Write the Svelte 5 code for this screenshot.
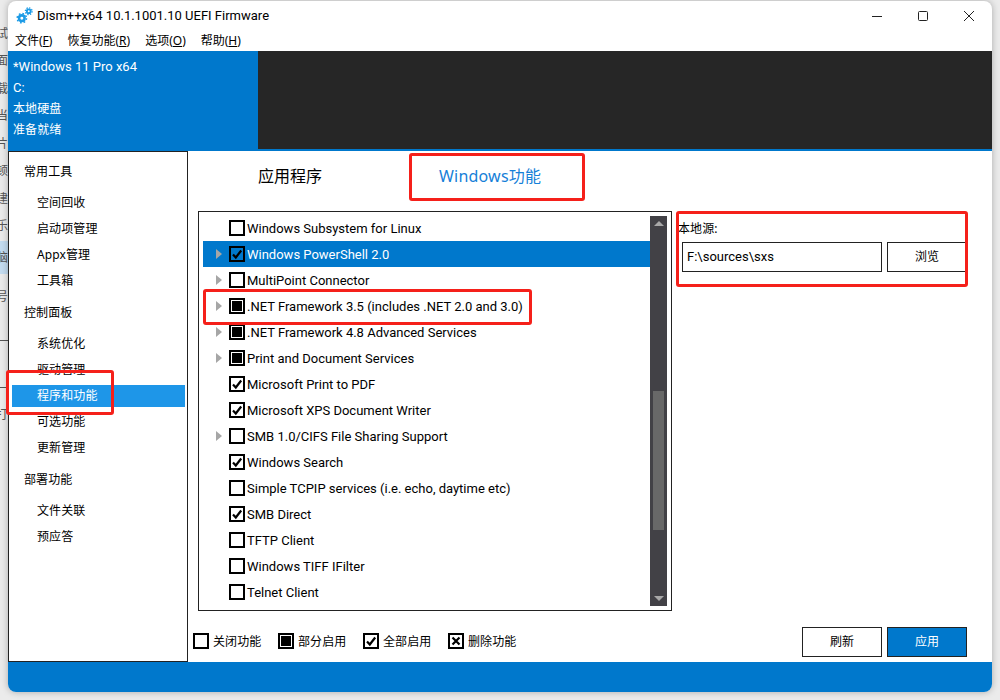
<script>
    const strip = [
        { t: "试" }, { t: "面" }, { t: "载" }, { t: "当" }, { t: "片" }, { t: "顿" }, { t: "建" }, { t: "乐" },
        { t: "脑", active: true }, { t: "号" }, { t: "" }
    ];

    const menus = [
        { label: "文件", key: "F" },
        { label: "恢复功能", key: "R" },
        { label: "选项", key: "O" },
        { label: "帮助", key: "H" }
    ];

    const info = [
        { text: "*Windows 11 Pro x64", latin: true },
        { text: "C:", latin: true },
        { text: "本地硬盘" },
        { text: "准备就绪" }
    ];

    const groups = [
        { title: "常用工具", items: ["空间回收", "启动项管理", "Appx管理", "工具箱"] },
        { title: "控制面板", items: ["系统优化", "驱动管理", "程序和功能", "可选功能", "更新管理"] },
        { title: "部署功能", items: ["文件关联", "预应答"] }
    ];

    const features = [
        { name: "Windows Subsystem for Linux", state: "off", arrow: false },
        { name: "Windows PowerShell 2.0", state: "on", arrow: true, selected: true },
        { name: "MultiPoint Connector", state: "off", arrow: true },
        { name: ".NET Framework 3.5 (includes .NET 2.0 and 3.0)", state: "part", arrow: true },
        { name: ".NET Framework 4.8 Advanced Services", state: "part", arrow: true },
        { name: "Print and Document Services", state: "part", arrow: true },
        { name: "Microsoft Print to PDF", state: "on", arrow: false },
        { name: "Microsoft XPS Document Writer", state: "on", arrow: false },
        { name: "SMB 1.0/CIFS File Sharing Support", state: "off", arrow: true },
        { name: "Windows Search", state: "on", arrow: false },
        { name: "Simple TCPIP services (i.e. echo, daytime etc)", state: "off", arrow: false },
        { name: "SMB Direct", state: "on", arrow: false },
        { name: "TFTP Client", state: "off", arrow: false },
        { name: "Windows TIFF IFilter", state: "off", arrow: false },
        { name: "Telnet Client", state: "off", arrow: false }
    ];

    const legend = [
        { name: "关闭功能", state: "off" },
        { name: "部分启用", state: "part" },
        { name: "全部启用", state: "on" },
        { name: "删除功能", state: "del" }
    ];
</script>

{#snippet checkbox(state)}
    <span class="box">
        {#if state == "part"}
            <span class="fill"></span>
        {:else if state == "on"}
            <svg viewBox="0 0 12 12" width="12" height="12"><path d="M2 6.5 L4.8 9.5 L10.2 2.5" fill="none" stroke="#000" stroke-width="2.2"/></svg>
        {:else if state == "del"}
            <svg viewBox="0 0 12 12" width="12" height="12"><path d="M2.5 2.5 L9.5 9.5 M9.5 2.5 L2.5 9.5" fill="none" stroke="#000" stroke-width="2.2"/></svg>
        {/if}
    </span>
{/snippet}

<main class="page">
    <div class="strip">
        {#each strip as row}
            <div class="strip-row" class:active={row.active}>{row.t}</div>
        {/each}
        <div class="strip-line"></div>
        <div class="strip-row tall">打</div>
    </div>

    <div class="window">
        <header class="titlebar">
            <svg class="logo" viewBox="0 0 16 16" width="17" height="17">
                <g fill="none" stroke="#1c9be6">
                    <circle cx="5.5" cy="10.5" r="2.6" stroke-width="2.4"/>
                    <circle cx="5.5" cy="10.5" r="4.4" stroke-width="1.4" stroke-dasharray="1.6 1.85"/>
                    <circle cx="12" cy="4" r="1.8" stroke-width="1.8"/>
                    <circle cx="12" cy="4" r="3.2" stroke-width="1.2" stroke-dasharray="1.3 1.2"/>
                </g>
            </svg>
            <span class="title latin">Dism++x64 10.1.1001.10 UEFI Firmware</span>
            <div class="controls">
                <span class="control"><svg viewBox="0 0 10 10" width="10" height="10"><path d="M0 5.5 H10" stroke="#222" fill="none"/></svg></span>
                <span class="control"><svg viewBox="0 0 10 10" width="10" height="10"><rect x="0.5" y="0.5" width="9" height="9" rx="1" stroke="#222" fill="none"/></svg></span>
                <span class="control"><svg viewBox="0 0 10 10" width="10" height="10"><path d="M0 0 L10 10 M10 0 L0 10" stroke="#222" fill="none"/></svg></span>
            </div>
        </header>

        <nav class="menubar">
            {#each menus as m}
                <span class="menu">{m.label}(<u>{m.key}</u>)</span>
            {/each}
        </nav>

        <section class="banner">
            <div class="info">
                {#each info as line}
                    <div class="info-line" class:latin={line.latin}>{line.text}</div>
                {/each}
            </div>
        </section>

        <div class="body">
            <aside class="sidebar">
                {#each groups as g}
                    <div class="group">
                        <div class="group-title">{g.title}</div>
                        {#each g.items as item}
                            <div class="side-item" class:current={item == "程序和功能"}>{item}</div>
                        {/each}
                    </div>
                {/each}
            </aside>

            <div class="content">
                <div class="tabs">
                    <span class="tab">应用程序</span>
                    <span class="tab active">Windows功能</span>
                </div>

                <div class="columns">
                    <div class="list">
                        <div class="rows">
                            {#each features as f}
                                <div class="row" class:selected={f.selected}>
                                    <span class="arrow-slot">
                                        {#if f.arrow}<span class="arrow"></span>{/if}
                                    </span>
                                    {@render checkbox(f.state)}
                                    <span class="row-name latin">{f.name}</span>
                                </div>
                            {/each}
                        </div>
                        <div class="scrollbar">
                            <span class="tri up"></span>
                            <div class="track"><div class="thumb"></div></div>
                            <span class="tri down"></span>
                        </div>
                    </div>

                    <div class="source">
                        <div class="source-label">本地源:</div>
                        <div class="source-row">
                            <div class="input latin">F:\sources\sxs</div>
                            <div class="btn">浏览</div>
                        </div>
                    </div>
                </div>

                <div class="footer">
                    <div class="legend">
                        {#each legend as l}
                            <div class="legend-item">
                                {@render checkbox(l.state)}
                                <span>{l.name}</span>
                            </div>
                        {/each}
                    </div>
                    <div class="actions">
                        <div class="btn">刷新</div>
                        <div class="btn primary">应用</div>
                    </div>
                </div>
            </div>
        </div>

        <div class="statusbar"></div>
    </div>

    <!-- red annotation boxes drawn over the screenshot -->
    <div class="mark mark-tab"></div>
    <div class="mark mark-row"></div>
    <div class="mark mark-source"></div>
    <div class="mark mark-side"></div>
</main>

<style>
    :global(body) {
        margin: 0;
        background: #e9e9e9;
    }
    .page {
        position: relative;
        display: flex;
        width: 1000px;
        height: 700px;
        overflow: hidden;
        background: #ebebeb;
        font-family: "Noto Sans", "Noto Sans CJK SC", sans-serif;
        font-size: 12px;
        letter-spacing: 0.1px;
        color: #000;
    }
    /* Latin-only strings render a bit larger in the original */
    .latin {
        font-family: Roboto, "Noto Sans CJK SC", sans-serif;
        font-size: 13px;
        letter-spacing: 0;
    }

    .strip {
        width: 8px;
        flex: none;
        padding-top: 20px;
        overflow: hidden;
        color: #555;
    }
    .strip-row {
        display: flex;
        justify-content: flex-end;
        align-items: center;
        height: 27.5px;
        white-space: nowrap;
        line-height: 1;
    }
    .strip-row.active {
        height: 33px;
        margin: 1px 0 9px;
        background: #c4dcf0;
    }
    .strip-line {
        height: 46px;
        margin-top: 2px;
        border-top: 1px solid #555;
        border-bottom: 1px solid #555;
    }
    .strip-row.tall {
        margin-top: 13px;
    }

    .window {
        display: flex;
        flex-direction: column;
        width: 984px;
        height: 691px;
        margin-top: 1px;
        background: #fff;
        border-radius: 8px;
        overflow: hidden;
        box-shadow: 0 0 7px rgba(0, 0, 0, 0.28);
    }

    .titlebar {
        display: flex;
        align-items: center;
        height: 29px;
        padding-left: 8px;
        flex: none;
    }
    .logo {
        margin-right: 4px;
    }
    .controls {
        display: flex;
        margin-left: auto;
    }
    .control {
        display: flex;
        justify-content: center;
        align-items: center;
        width: 46px;
        height: 29px;
    }

    .menubar {
        display: flex;
        align-items: center;
        gap: 15px;
        height: 20px;
        padding: 0 0 1px 7px;
        flex: none;
        letter-spacing: 0;
    }

    .banner {
        height: 98px;
        flex: none;
        background: #262626;
        border-bottom: 2px solid #0078cc;
    }
    .info {
        width: 245px;
        height: 93px;
        padding: 5px 0 0 5px;
        background: #0078cc;
        color: #fff;
    }
    .info-line {
        height: 21px;
        line-height: 21px;
    }

    .body {
        display: flex;
        flex: 1;
        min-height: 0;
    }

    .sidebar {
        box-sizing: border-box;
        width: 180px;
        flex: none;
        padding: 7px 2px 0 3px;
        border: 1px solid #222;
    }
    .group {
        margin-bottom: 8px;
    }
    .group-title {
        height: 26px;
        line-height: 26px;
        padding-left: 12px;
        margin-bottom: 7px;
    }
    .side-item {
        height: 22px;
        line-height: 22px;
        margin-bottom: 4px;
        padding-left: 25px;
    }
    .side-item.current {
        background: #1e96e8;
        color: #fff;
    }

    .content {
        display: flex;
        flex-direction: column;
        flex: 1;
        min-width: 0;
    }

    .tabs {
        display: flex;
        align-items: center;
        height: 50px;
        padding: 0 0 10px 70px;
        flex: none;
    }
    .tab {
        font-size: 16px;
        line-height: 1;
        letter-spacing: 0;
    }
    .tab.active {
        margin-left: 117px;
        letter-spacing: 0.2px;
        color: #1580d8;
    }

    .columns {
        display: flex;
        padding-left: 10px;
    }

    .list {
        box-sizing: border-box;
        display: flex;
        width: 474px;
        height: 400px;
        padding: 4px;
        border: 1px solid #222;
        overflow: hidden;
    }
    .rows {
        flex: 1;
        min-width: 0;
        margin-top: -1px;
    }
    .row {
        display: flex;
        align-items: center;
        height: 26px;
    }
    .row.selected {
        background: #0078cc;
        color: #fff;
    }
    .arrow-slot {
        display: flex;
        align-items: center;
        width: 26px;
        padding-left: 13px;
        box-sizing: border-box;
        flex: none;
    }
    .arrow {
        width: 0;
        height: 0;
        border-left: 6px solid #a6a6a6;
        border-top: 5px solid transparent;
        border-bottom: 5px solid transparent;
    }
    .box {
        box-sizing: border-box;
        display: flex;
        align-items: center;
        justify-content: center;
        width: 16px;
        height: 16px;
        flex: none;
        border: 2px solid #000;
    }
    .fill {
        width: 10px;
        height: 10px;
        background: #000;
    }
    .row-name {
        margin-left: 2px;
        white-space: nowrap;
    }

    .scrollbar {
        display: flex;
        flex-direction: column;
        align-items: center;
        width: 17px;
        flex: none;
        background: #424146;
    }
    .track {
        flex: 1;
        width: 11px;
        padding-top: 161px;
    }
    .thumb {
        height: 139px;
        background: #686868;
    }
    .tri {
        width: 0;
        height: 0;
        border-left: 5px solid transparent;
        border-right: 5px solid transparent;
        flex: none;
    }
    .tri.up {
        margin: 5px 0 4px;
        border-bottom: 5px solid #a8a8a8;
    }
    .tri.down {
        margin: 4px 0 5px;
        border-top: 5px solid #a8a8a8;
    }

    .source {
        padding: 8px 0 0 6px;
    }
    .source-label {
        height: 23px;
        line-height: 20px;
    }
    .source-row {
        display: flex;
        gap: 5px;
        padding-left: 4px;
    }
    .input {
        box-sizing: border-box;
        width: 200px;
        height: 30px;
        line-height: 28px;
        padding-left: 4px;
        border: 1px solid #222;
    }
    .btn {
        box-sizing: border-box;
        width: 80px;
        height: 30px;
        line-height: 28px;
        text-align: center;
        border: 1px solid #222;
    }
    .btn.primary {
        background: #0078cc;
        color: #fff;
    }

    .footer {
        display: flex;
        align-items: center;
        justify-content: space-between;
        flex: 1;
        padding: 11px 25px 0 5px;
    }
    .legend {
        display: flex;
        margin-bottom: 2px;
    }
    .legend-item {
        display: flex;
        align-items: center;
        gap: 4px;
        width: 85px;
    }
    .actions {
        display: flex;
        gap: 5px;
    }

    .statusbar {
        height: 30px;
        flex: none;
        background: #0078cc;
    }

    .mark {
        position: absolute;
        box-sizing: border-box;
        border: 3px solid #f5201a;
        border-radius: 3px;
    }
    .mark-tab { left: 409px; top: 153px; width: 176px; height: 48px; }
    .mark-row { left: 203px; top: 289px; width: 329px; height: 36px; }
    .mark-source { left: 676px; top: 211px; width: 292px; height: 76px; }
    .mark-side { left: 6px; top: 370px; width: 108px; height: 45px; }
</style>
